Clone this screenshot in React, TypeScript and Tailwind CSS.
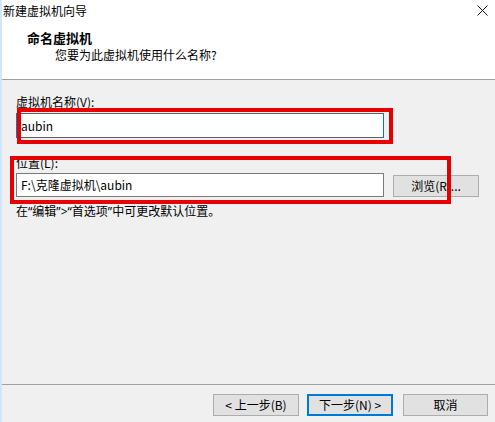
export default function App() {
  const font = 'font-["Noto_Sans_CJK_SC",sans-serif]';
  const narrow = 'font-["Noto_Sans",sans-serif]';
  return (
    <div className={`relative w-[495px] h-[422px] flex flex-col bg-[#f0f0f0] border-l-2 border-[#cfe6fb] text-black text-[12px] ${font}`}>
      {/* Title bar */}
      <div className="h-[22px] bg-white flex items-center justify-between pl-[1px] pr-[7px]">
        <span className="leading-[16px]">新建虚拟机向导</span>
        <svg width="11" height="11" viewBox="0 0 11 11" className="mt-[-2px]">
          <path d="M0.5 0.5 L10.5 10.5 M10.5 0.5 L0.5 10.5" stroke="#111" strokeWidth="1" />
        </svg>
      </div>

      {/* Header */}
      <div className="h-[58px] bg-white border-b border-[#a0a0a0] pt-[7px] pl-[25px]">
        <div className="text-[13px] font-bold leading-[18px]">命名虚拟机</div>
        <div className="pl-[28px] leading-[16px]">您要为此虚拟机使用什么名称?</div>
      </div>

      {/* Body */}
      <div className="pt-[14px] pl-[14px]">
        <div className="leading-[16px]">虚拟机名称(V):</div>
        <div className="mt-[3px] w-[368px] h-[25px] bg-white border border-[#0078d7] flex items-center pl-[4px] leading-[16px]">
          aubin
        </div>

        <div className="mt-[17px] leading-[16px]">位置(L):</div>
        <div className="mt-[2px] flex items-start">
          <div className="w-[368px] h-[24px] bg-white border border-[#7a7a7a] flex items-center pl-[4px] leading-[16px]">
            F:\克隆虚拟机\aubin
          </div>
          <button className="ml-[9px] mt-[2px] w-[86px] h-[22px] bg-[#e1e1e1] border border-[#adadad] flex items-center justify-center leading-[16px]">
            浏览(R)...
          </button>
        </div>

        <div className="mt-[6px] leading-[16px]">
          在<span className={narrow}>“</span>编辑<span className={narrow}>”&gt;“</span>首选项<span className={narrow}>”</span>中可更改默认位置。
        </div>
      </div>

      <div className="flex-1" />

      {/* Footer */}
      <div className="border-t border-[#a0a0a0] pt-[9px] pb-[6px] pr-[7px] flex justify-end">
        <button className="w-[86px] h-[22px] bg-[#e1e1e1] border border-[#adadad] flex items-center justify-center leading-[16px]">
          &lt; 上一步(B)
        </button>
        <button className="ml-[8px] w-[86px] h-[22px] bg-[#e1e1e1] border-2 border-[#0078d7] flex items-center justify-center leading-[16px]">
          下一步(N) &gt;
        </button>
        <button className="ml-[10px] w-[85px] h-[22px] bg-[#e1e1e1] border border-[#adadad] flex items-center justify-center leading-[16px]">
          取消
        </button>
      </div>

      {/* Red annotation boxes */}
      <div className="absolute left-[15px] top-[108px] w-[376px] h-[36px] border-4 border-[#e60000]" />
      <div className="absolute left-[8px] top-[156px] w-[441px] h-[48px] border-4 border-[#e60000]" />
    </div>
  );
}
